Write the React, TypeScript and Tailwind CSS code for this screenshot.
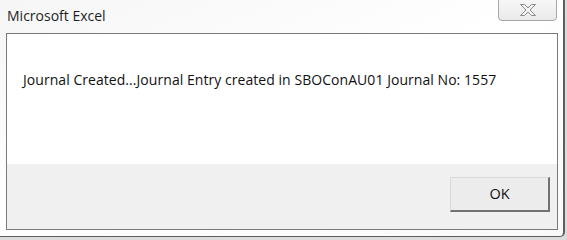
import React from "react";

const CloseGlyph = () => (
    <svg width="20" height="14" viewBox="0 0 20 14">
        <path
            d="M2.5 1.5 H6.5 L10 5 L13.5 1.5 H17.5 L12 7 L17.5 12.5 H13.5 L10 9 L6.5 12.5 H2.5 L8 7 Z"
            fill="#f4f4f4"
            stroke="#8a8a8a"
            strokeWidth="1"
            strokeLinejoin="round"
        />
    </svg>
);

const MessageBox: React.FC = () => {
    return (
        <div className="w-[567px] h-[240px] bg-[#dcdcdc] overflow-hidden" style={{ fontFamily: "'Open Sans', 'Noto Sans', sans-serif" }}>
            <div className="w-[565px] h-[237px] bg-gradient-to-br from-[#f6f6f6] via-white to-[#f9f9f9] border-r-2 border-b border-[#5e5e5e] rounded-br-[5px] flex flex-col">
                {/* title bar */}
                <div className="h-[33px] flex items-start justify-between pl-[7px] pr-[6px]">
                    <span className="mt-[5px] text-[14px] text-[#1e1e1e]">Microsoft Excel</span>
                    <button className="w-[59px] h-[22px] -mt-px flex items-center justify-center border border-[#a8a8a8] rounded-b-[4px] bg-gradient-to-b from-[#f7f7f7] to-[#e9e9e9]">
                        <CloseGlyph />
                    </button>
                </div>

                {/* content */}
                <div className="ml-[6px] w-[552px] h-[197px] border border-[#7a7a7a] flex flex-col">
                    <div className="h-[130px] bg-white pl-[16px] pt-[36px]">
                        <p className="text-[14px] leading-[20px] text-[#111] tracking-[0.05px]">
                            Journal Created...Journal Entry created in SBOConAU01 Journal No: 1557
                        </p>
                    </div>
                    <div className="flex-1 bg-[#f0f0f0] flex justify-end items-start pt-[13px] pr-[7px]">
                        <button className="w-[100px] h-[35px] bg-[#ececec] border-t border-l border-[#d9d9d9] border-r-2 border-b-2 border-r-[#727272] border-b-[#727272] text-[14.5px] text-[#111] flex items-center justify-center">
                            OK
                        </button>
                    </div>
                </div>
            </div>
        </div>
    );
};

export default function App() {
    return <MessageBox />;
}
